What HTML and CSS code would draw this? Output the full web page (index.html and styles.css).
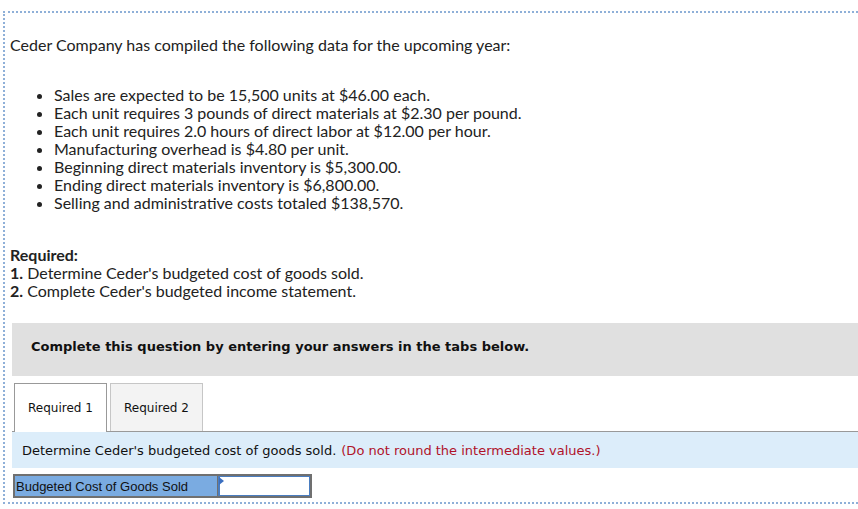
FILE: index.html
```html
<!DOCTYPE html>
<html>
<head>
<meta charset="utf-8">
<link rel="stylesheet" href="styles.css">
</head>
<body>
<div class="frame">
  <p class="intro">Ceder Company has compiled the following data for the upcoming year:</p>
  <ul class="facts">
    <li>Sales are expected to be 15,500 units at $46.00 each.</li>
    <li>Each unit requires 3 pounds of direct materials at $2.30 per pound.</li>
    <li>Each unit requires 2.0 hours of direct labor at $12.00 per hour.</li>
    <li>Manufacturing overhead is $4.80 per unit.</li>
    <li>Beginning direct materials inventory is $5,300.00.</li>
    <li>Ending direct materials inventory is $6,800.00.</li>
    <li>Selling and administrative costs totaled $138,570.</li>
  </ul>
  <div class="required">
    <div class="req-title">Required:</div>
    <div><b>1.</b> Determine Ceder's budgeted cost of goods sold.</div>
    <div><b>2.</b> Complete Ceder's budgeted income statement.</div>
  </div>
  <div class="notice">Complete this question by entering your answers in the tabs below.</div>
  <div class="tabs">
    <div class="tab active">Required 1</div>
    <div class="tab">Required 2</div>
  </div>
  <div class="band">Determine Ceder's budgeted cost of goods sold. <span class="hint">(Do not round the intermediate values.)</span></div>
  <div class="answer">
    <div class="label">Budgeted Cost of Goods Sold</div>
    <div class="input"><span class="flag"></span></div>
  </div>
</div>
</body>
</html>
```
FILE: styles.css
```css
html, body { margin: 0; padding: 0; background: #fff; overflow: hidden; }
body { width: 858px; height: 509px; }
.frame {
  margin: 11px 0 0 3px;
  width: 855px;
  height: 493px;
  box-sizing: border-box;
  border: 2px dotted #8fb0d8;
  border-right: none;
  padding: 0 0 0 5px;
  font-family: Lato, "Open Sans", sans-serif;
  font-size: 16px;
  color: #222;
}
.intro { margin: 23px 0 0 0; line-height: 18px; }
.facts { margin: 32px 0 0 0; padding: 0 0 0 44px; line-height: 18px; }
.required { margin-top: 34px; line-height: 18px; }
.req-title { font-weight: bold; }
.notice {
  margin: 23px 0 0 2px;
  height: 53px;
  background: #e0e0e0;
  font-family: "DejaVu Sans", Verdana, sans-serif;
  font-weight: bold;
  font-size: 13px;
  color: #111;
  display: flex;
  align-items: center;
  padding: 0 0 6px 19px;
  box-sizing: border-box;
}
.tabs { display: flex; gap: 3px; margin: 7px 0 0 4px; }
.tab {
  width: 91px;
  height: 47px;
  border: 1px solid #c6c6c6;
  border-bottom: none;
  background: #f3f3f3;
  font-family: "DejaVu Sans", Verdana, sans-serif;
  font-size: 12px;
  color: #111;
  display: flex;
  align-items: center;
  justify-content: center;
}
.tab.active { background: #fff; border-color: #999; height: 48px; margin-bottom: -1px; position: relative; }
.band {
  margin-left: 2px;
  border-top: 1px solid #999;
  background: #dcedfa;
  height: 36px;
  display: flex;
  align-items: center;
  padding-left: 10px;
  font-family: "DejaVu Sans", Verdana, sans-serif;
  font-size: 13px;
  color: #111;
}
.hint { color: #b0132a; margin-left: 5px; }
.answer { display: flex; margin: 6px 0 0 3px; height: 24px; }
.label {
  width: 205px;
  box-sizing: border-box;
  border: 2px solid #707070;
  border-right: 1px solid #707070;
  background: #7aabe1;
  font-family: "Liberation Sans", Arial, sans-serif;
  font-size: 13px;
  color: #111;
  display: flex;
  align-items: center;
  padding-left: 1px;
}
.input {
  width: 94px;
  box-sizing: border-box;
  border: 2px solid #707070;
  border-left: none;
  background: #fff;
  position: relative;
  box-shadow: inset 0 0 0 1px #4a7dc0, inset 1px 0 0 1px #4a7dc0;
}
.flag {
  position: absolute;
  left: 1px; top: 1px;
  width: 0; height: 0;
  border-top: 4px solid transparent;
  border-bottom: 4px solid transparent;
  border-left: 5px solid #3b6fc0;
}
```
